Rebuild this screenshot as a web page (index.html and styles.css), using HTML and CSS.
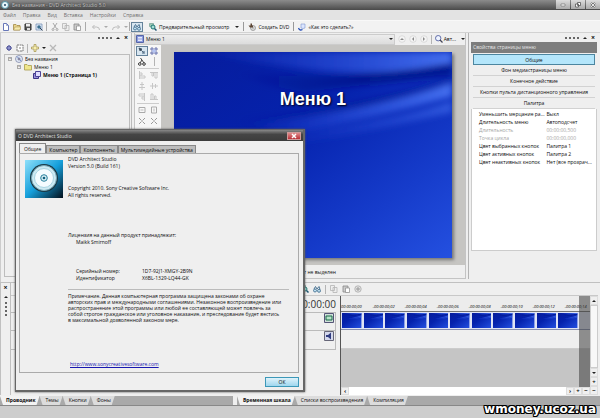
FILE: index.html
```html
<!DOCTYPE html>
<html lang="ru">
<head>
<meta charset="utf-8">
<title>Без названия - DVD Architect Studio 5.0</title>
<link rel="stylesheet" href="styles.css">
</head>
<body>
<svg class="defs" aria-hidden="true">
  <defs>
    <linearGradient id="sky" x1="0" y1="0" x2="1" y2="1">
      <stop offset="0" stop-color="#061c9c"/><stop offset=".4" stop-color="#0522ad"/><stop offset=".75" stop-color="#163ccb"/><stop offset="1" stop-color="#2450e0"/>
    </linearGradient>
    <linearGradient id="ray" x1="0" y1="0" x2="1" y2="0">
      <stop offset="0" stop-color="#2a50e6" stop-opacity="0"/><stop offset="1" stop-color="#4a76f4" stop-opacity=".9"/>
    </linearGradient>
    <linearGradient id="shade" x1="0" y1="0" x2="1" y2="0">
      <stop offset="0" stop-color="#001488" stop-opacity="0"/><stop offset=".6" stop-color="#001488" stop-opacity=".8"/><stop offset="1" stop-color="#041a94"/>
    </linearGradient>
    <linearGradient id="disc" x1="0" y1="0" x2="1" y2="1">
      <stop offset="0" stop-color="#8fe0fa"/><stop offset=".5" stop-color="#159fdb"/><stop offset="1" stop-color="#02101c"/>
    </linearGradient>
    <filter id="soft" x="-10%" y="-30%" width="120%" height="160%"><feGaussianBlur stdDeviation="3"/></filter>
  </defs>
  <symbol id="backdrop" viewBox="0 0 278 205" preserveAspectRatio="none">
    <rect width="278" height="205" fill="url(#sky)"/>
    <g filter="url(#soft)">
      <path d="M20 0H278V14Q190 24 130 17Q70 10 20 0Z" fill="url(#ray)"/>
      <path d="M60 20Q170 30 278 11V24Q190 32 130 40Q80 32 60 20Z" fill="url(#shade)"/>
      <path d="M70 70Q200 58 278 30V44Q200 66 110 82Z" fill="url(#ray)"/>
      <path d="M100 80Q210 72 278 49V60Q200 78 120 92Z" fill="url(#ray)" opacity=".6"/>
      <path d="M60 66Q180 56 278 26V31Q190 60 70 74Z" fill="url(#shade)" opacity=".6"/>
    </g>
  </symbol>
  <symbol id="i-new" viewBox="0 0 8 8"><path d="M1.5.5h3l2 2v5h-5z" fill="#fff" stroke="#6878b8"/><path d="M4.5.5v2h2" fill="none" stroke="#6878b8" stroke-width=".6"/></symbol>
  <symbol id="i-open" viewBox="0 0 8 8"><path d="M.5 7V1.5h2.5l1 1h3V7z" fill="#e8d48a" stroke="#a28a48" stroke-width=".8"/><path d="M.5 7 2 4h6L6.800 7z" fill="#f6ebaf" stroke="#a28a48" stroke-width=".5"/></symbol>
  <symbol id="i-save" viewBox="0 0 8 8"><path d="M1 1h6v6H1z" fill="#555" stroke="#333"/><path d="M2 1h4v2.500H2z" fill="#eee"/><path d="M3 5h3v2H3z" fill="#ddd"/></symbol>
  <symbol id="i-props" viewBox="0 0 8 8"><path d="M1 1h6v6H1z" fill="#dfe9f6" stroke="#6a88b0" stroke-width=".7"/><circle cx="4" cy="4" r="1.800" fill="#3c7090"/><path d="m5 5 2.500 2.500" stroke="#345"/></symbol>
  <symbol id="i-cut" viewBox="0 0 8 8"><path d="M2 0 5.500 5.500M6 0 2.500 5.500" stroke="#a8a8a8" fill="none"/><circle cx="2" cy="6.500" r="1" fill="none" stroke="#a8a8a8"/><circle cx="6" cy="6.500" r="1" fill="none" stroke="#a8a8a8"/></symbol>
  <symbol id="i-copy" viewBox="0 0 8 8"><path d="M.500 .500h4v5h-4zM3 2.500h4v5H3z" fill="#eee" stroke="#b4b4b4" stroke-width=".8"/></symbol>
  <symbol id="i-paste" viewBox="0 0 8 8"><path d="M1 1h5v6H1z" fill="#ccc" stroke="#888" stroke-width=".8"/><path d="M3.500 3h4v4.500h-4z" fill="#fff" stroke="#888" stroke-width=".7"/></symbol>
  <symbol id="i-undo" viewBox="0 0 8 8"><path d="M.500 4h4q3 0 3 3M2.500 2 .500 4l2 2" fill="none" stroke="#bcbcbc"/></symbol>
  <symbol id="i-redo" viewBox="0 0 8 8"><path d="M7.500 4h-4q-3 0-3 3M5.500 2l2 2-2 2" fill="none" stroke="#bcbcbc"/></symbol>
  <symbol id="i-find" viewBox="0 0 8 8"><path d="M1 4 2.500 1.500 4 4l2-2.500L7 4.500" fill="none" stroke="#4a7494"/><circle cx="2" cy="5.500" r="1.500" fill="#bfe0f0" stroke="#3a688c" stroke-width=".8"/><circle cx="6" cy="5.800" r="1.500" fill="#bfe0f0" stroke="#3a688c" stroke-width=".8"/></symbol>
  <symbol id="i-preview" viewBox="0 0 8 8"><path d="M.500 .500h4v3h-4z" fill="#9cc8b4" stroke="#68948c" stroke-width=".6"/><circle cx="4" cy="4" r="2" fill="#a8e0d8" stroke="#1c7470"/><path d="m5.500 5.500 2 2" stroke="#1c5470" stroke-width="1.500"/></symbol>
  <symbol id="i-burn" viewBox="0 0 8 8"><circle cx="5" cy="5" r="2.500" fill="#ddd" stroke="#888" stroke-width=".7"/><circle cx="5" cy="5" r=".7" fill="#fff" stroke="#777" stroke-width=".4"/><path d="M.500 2.500h2v-2h1.500v2h1v2H2z" fill="#5c4634"/></symbol>
  <symbol id="i-how" viewBox="0 0 8 8"><path d="M3 1h4v4l-2 .500L3 5z" fill="#dce6ff" stroke="#7c94cc" stroke-width=".6"/><path d="M.500 5q1 3 4 1.500" fill="none" stroke="#2850b8" stroke-width="1.300"/></symbol>
  <symbol id="i-gear" viewBox="0 0 8 8"><path d="M4 1v6M1 4h6M2 2l4 4M6 2l-4 4" stroke="#50549c"/><circle cx="4" cy="4" r="2" fill="#8c90cc" stroke="#484c90" stroke-width=".8"/></symbol>
  <symbol id="i-box" viewBox="0 0 8 8"><path d="M1 1h6v6H1z" fill="#fff" stroke="#777" stroke-dasharray="2 .6"/><circle cx="4" cy="4" r="1" fill="#aaa"/></symbol>
  <symbol id="i-add" viewBox="0 0 8 8"><path d="M3 .500h2V3h2.500v2H5v2.500H3V5H.500V3H3z" fill="#f7efb0" stroke="#a89a58" stroke-width=".8"/></symbol>
  <symbol id="i-del" viewBox="0 0 8 8"><path d="m1 1 6 6M7 1 1 7" stroke="#b8b8b8" stroke-width="1.300"/></symbol>
  <symbol id="i-disc" viewBox="0 0 8 8"><circle cx="4" cy="4" r="3.500" fill="#e4ecf8" stroke="#8088a8" stroke-width=".8"/><path d="M2 1.500 6 6" stroke="#7090d0"/><circle cx="4" cy="4" r="1" fill="#fff" stroke="#668"/></symbol>
  <symbol id="i-folder" viewBox="0 0 8 8"><path d="M.500 7V1.500H3l1 1h3.500V7z" fill="#efe68c" stroke="#a89c4c" stroke-width=".8"/></symbol>
  <symbol id="i-page" viewBox="0 0 8 8"><path d="M.500 2.500h5v5h-5z" fill="#9890d8" stroke="#3c3484"/><path d="M2.500.500h5v5h-5z" fill="#e0dcff" stroke="#4c4498"/></symbol>
  <symbol id="i-menu" viewBox="0 0 8 8"><path d="M.500 .500h7v7h-7z" fill="#8c9ce0" stroke="#5464a8"/><path d="M2 2.500h4M2 4h4M2 5.500h4" stroke="#fff" stroke-width=".8"/></symbol>
  <symbol id="i-cursor" viewBox="0 0 8 8"><path d="m1 1 3 1-2 2zM3 3l3 3" fill="#345" stroke="#345" stroke-width=".7"/><path d="M4.500 4.500h2v2h-2z" fill="none" stroke="#357" stroke-width=".5"/></symbol>
  <symbol id="i-grid" viewBox="0 0 8 8"><path d="M2 0v8M6 0v8M0 2h8M0 6h8" stroke="#5c68a8" stroke-width=".9"/><path d="M2.500 2.500h3v3h-3z" fill="#b4c4f4"/></symbol>
  <symbol id="i-link" viewBox="0 0 8 8"><path d="M2.500 0 6 5M4 2 2 5" stroke="#444" fill="none"/><circle cx="1.800" cy="6" r="1.300" fill="#fff" stroke="#333"/><circle cx="6" cy="6" r="1.300" fill="#fff" stroke="#333"/></symbol>
  <symbol id="i-al" viewBox="0 0 8 8"><path d="M1.500 0v8M2 2h2v2H2M2 5h5v2H2" fill="none" stroke="#c6c6c6"/></symbol>
  <symbol id="i-at" viewBox="0 0 8 8"><path d="M0 1.500h8M2 2v3h1.500V2M5 2v5h2V2" fill="none" stroke="#c6c6c6"/></symbol>
  <symbol id="i-ac" viewBox="0 0 8 8"><path d="M4 0v8M2 2.500h4M1 5.500h6" fill="none" stroke="#c6c6c6"/></symbol>
  <symbol id="i-size" viewBox="0 0 8 8"><path d="M1 1.500h6v5H1z" fill="#f8f8f8" stroke="#aaa"/><path d="M2.500 4h3" stroke="#bbb"/></symbol>
  <symbol id="i-x" viewBox="0 0 8 8"><path d="M1 1l2 2M7 1 5 3M1 7l2-2M7 7 5 5M3 4h2" stroke="#999" fill="none"/></symbol>
  <symbol id="i-up" viewBox="0 0 8 8"><circle cx="4" cy="4" r="3.300" fill="#f4f4f4" stroke="#ccc" stroke-width=".6"/><path d="m2 5 2-2 2 2z" fill="#8a8a8a"/></symbol>
  <symbol id="i-left" viewBox="0 0 8 8"><circle cx="4" cy="4" r="3.300" fill="#f4f4f4" stroke="#ccc" stroke-width=".6"/><path d="M5 2 3 4l2 2z" fill="#8a8a8a"/></symbol>
  <symbol id="i-right" viewBox="0 0 8 8"><circle cx="4" cy="4" r="3.300" fill="#f4f4f4" stroke="#ccc" stroke-width=".6"/><path d="m3 2 2 2-2 2z" fill="#8a8a8a"/></symbol>
  <symbol id="i-zoom" viewBox="0 0 8 8"><circle cx="3.200" cy="3.200" r="2.700" fill="#eef4ff" stroke="#5460a0" stroke-width=".9"/><path d="m5 5 2.500 2.500" stroke="#445" stroke-width="1.300"/></symbol>
  <symbol id="i-reel" viewBox="0 0 8 8"><circle cx="4" cy="4" r="3.200" fill="#e4e4e4" stroke="#a8a8a8" stroke-width=".8"/><path d="M2 4h4M4 2v4" stroke="#999"/></symbol>
  <symbol id="i-film" viewBox="0 0 10 10"><path d="M.500 .500h9v9h-9z" fill="#cfe0d8" stroke="#557"/><path d="M2 3h6v4H2z" fill="#b8e4c8" stroke="#186848"/></symbol>
  <symbol id="i-sound" viewBox="0 0 10 10"><path d="M.500 .500h9v9h-9z" fill="#d4d8ec" stroke="#667"/><path d="M2 4h2l3-2.500v7L4 6H2z" fill="#303c80"/></symbol>
</svg>

<header class="titlebar">
  <svg class="ico" viewBox="0 0 8 8"><circle cx="4" cy="4" r="3.500" fill="#e8f6fa" stroke="#4f8ca0"/><circle cx="4" cy="4" r="1" fill="#246"/></svg>
  <h1>Без названия - DVD Architect Studio 5.0</h1>
  <div class="winbtns">
    <button aria-label="Свернуть"><svg viewBox="0 0 8 6"><path d="M2 2h4v2H2z" fill="#fff" stroke="#777" stroke-width=".7"/></svg></button>
    <button aria-label="Восстановить"><svg viewBox="0 0 8 6"><path d="M3.500 .500h3v3h-3zM1.500 2h3v3h-3z" fill="#fff" stroke="#555" stroke-width=".8"/></svg></button>
    <button aria-label="Закрыть"><svg viewBox="0 0 8 6"><path d="m2 1 4 4M6 1 2 5" stroke="#666" stroke-width="1.800"/><path d="m2 1 4 4M6 1 2 5" stroke="#fff" stroke-width=".8"/></svg></button>
  </div>
</header>
<nav class="menubar"><a href="#">Файл</a><a href="#">Правка</a><a href="#">Вид</a><a href="#">Вставка</a><a href="#">Настройки</a><a href="#">Справка</a></nav>

<div class="toolbar">
  <div class="group g1">
    <button aria-label="Создать"><svg class="ico"><use href="#i-new"/></svg></button><button aria-label="Открыть"><svg class="ico"><use href="#i-open"/></svg></button><button aria-label="Сохранить"><svg class="ico"><use href="#i-save"/></svg></button><button aria-label="Свойства"><svg class="ico"><use href="#i-props"/></svg></button>
  </div>
  <div class="group g2">
    <button aria-label="Вырезать"><svg class="ico"><use href="#i-cut"/></svg></button><button aria-label="Копировать"><svg class="ico"><use href="#i-copy"/></svg></button><button aria-label="Вставить"><svg class="ico"><use href="#i-paste"/></svg></button>
  </div>
  <div class="group g3">
    <button aria-label="Отменить"><svg class="ico"><use href="#i-undo"/></svg></button><i class="caret dim"></i><button aria-label="Повторить"><svg class="ico"><use href="#i-redo"/></svg></button><i class="caret dim"></i>
  </div>
  <button class="pressed" aria-label="Поиск"><svg class="ico"><use href="#i-find"/></svg></button>
  <button class="label preview"><svg class="ico"><use href="#i-preview"/></svg>Предварительный просмотр<i class="caret"></i></button>
  <button class="label"><svg class="ico"><use href="#i-burn"/></svg>Создать DVD</button>
  <button class="label last"><svg class="ico"><use href="#i-how"/></svg>«Как это сделать?»</button>
</div>

<main class="work">
  <section class="explorer">
    <div class="grip"><i></i><b class="tri"></b><b>×</b></div>
    <div class="extools">
      <button aria-label="Параметры"><svg class="ico"><use href="#i-gear"/></svg></button><button aria-label="Вид"><svg class="ico"><use href="#i-box"/></svg></button><span class="bar"></span><button aria-label="Добавить"><svg class="ico"><use href="#i-add"/></svg></button><i class="caret"></i><button aria-label="Удалить"><svg class="ico"><use href="#i-del"/></svg></button>
    </div>
    <ul class="tree">
      <li><span class="fold">−</span><svg class="ico"><use href="#i-disc"/></svg>Без названия</li>
      <li class="lv2"><span class="fold">−</span><svg class="ico"><use href="#i-folder"/></svg>Меню 1</li>
      <li class="lv3"><svg class="ico"><use href="#i-page"/></svg>Меню 1 (Страница 1)</li>
    </ul>
  </section>

  <section class="editor">
    <div class="pagebar">
      <button class="combo"><svg class="ico"><use href="#i-menu"/></svg><span>Меню 1</span><i class="caret"></i></button>
      <button aria-label="Вверх"><svg class="ico"><use href="#i-up"/></svg></button><button aria-label="Назад"><svg class="ico"><use href="#i-left"/></svg></button><button aria-label="Вперёд"><svg class="ico"><use href="#i-right"/></svg></button><span class="bar"></span>
      <button class="zoom"><svg class="ico"><use href="#i-zoom"/></svg>Авт...<i class="caret"></i></button>
    </div>
    <div class="stage">
      <div class="palette">
        <button class="pressed" aria-label="Выбор"><svg class="ico"><use href="#i-cursor"/></svg></button><button aria-label="Сетка"><svg class="ico"><use href="#i-grid"/></svg></button>
        <button aria-label="Связь"><svg class="ico"><use href="#i-link"/></svg></button><span class="bar"></span>
        <hr>
        <button aria-label="По левому краю"><svg class="ico"><use href="#i-al"/></svg></button><button aria-label="По верхнему краю"><svg class="ico"><use href="#i-at"/></svg></button>
        <button aria-label="По центру"><svg class="ico"><use href="#i-ac"/></svg></button><button aria-label="По середине"><svg class="ico turn"><use href="#i-ac"/></svg></button>
        <button aria-label="По правому краю"><svg class="ico flip"><use href="#i-al"/></svg></button><button aria-label="По нижнему краю"><svg class="ico flip"><use href="#i-at"/></svg></button>
        <hr>
        <button aria-label="Ширина"><svg class="ico"><use href="#i-size"/></svg></button><button aria-label="Высота"><svg class="ico turn"><use href="#i-size"/></svg></button>
        <button aria-label="Сжать"><svg class="ico"><use href="#i-x"/></svg></button><button aria-label="Растянуть"><svg class="ico turn"><use href="#i-x"/></svg></button>
      </div>
      <div class="canvas">
        <div class="slide"><svg class="bg"><use href="#backdrop"/></svg><h2>Меню 1</h2></div>
      </div>
    </div>
    <p class="selinfo">Объект не выделен</p>
  </section>

  <aside class="props">
    <div class="grip"><i></i><b class="tri"></b><b>×</b></div>
    <h3>Свойства страницы меню</h3>
    <div class="cats">
      <button class="on">Общие</button><button>Фон медиастраницы меню</button><button>Конечное действие</button><button>Кнопки пульта дистанционного управления</button><button>Палитра</button>
    </div>
    <div class="sheet">
      <table>
        <tr><th>Уменьшить мерцание ра...</th><td>Выкл</td></tr>
        <tr><th>Длительность меню</th><td>Автоподсчет</td></tr>
        <tr class="off"><th>Длительность</th><td>00:00:00,500</td></tr>
        <tr class="off"><th>Точка цикла</th><td>00:00:00,000</td></tr>
        <tr><th>Цвет выбранных кнопок</th><td>Палитра 1</td></tr>
        <tr><th>Цвет активных кнопок</th><td>Палитра 2</td></tr>
        <tr><th>Цвет неактивных кнопок</th><td>Нет (все прозрач...</td></tr>
      </table>
    </div>
  </aside>
</main>

<section class="dock">
  <div class="sidegrip"><b>×</b><b class="tri"></b><i></i></div>
  <div class="timeline">
    <div class="tltools">
      <svg class="ico"><use href="#i-preview"/></svg><svg class="ico"><use href="#i-find"/></svg><span class="bar"></span><svg class="ico"><use href="#i-copy"/></svg><svg class="ico"><use href="#i-paste"/></svg><svg class="ico"><use href="#i-reel"/></svg>
    </div>
    <div class="tlbody">
      <div class="heads">
        <div class="clock">00:00:00</div>
        <div class="head"><svg class="tico"><use href="#i-film"/></svg></div>
        <div class="head"><svg class="tico"><use href="#i-sound"/></svg></div>
      </div>
      <div class="tracks">
        <div class="lanes">
          <div class="ruler"><span>00:00:00;00</span><span>,00:00:00;02</span><span>,00:00:00;04</span><span>,00:00:00;06</span><span>,00:00:00;08</span><span>,00:00:00;10</span><span>,00:00:00;12</span><span>,00:00:00;14</span></div>
          <div class="clips"><svg><use href="#backdrop"/></svg><svg><use href="#backdrop"/></svg><svg><use href="#backdrop"/></svg><svg><use href="#backdrop"/></svg><svg><use href="#backdrop"/></svg><svg><use href="#backdrop"/></svg><svg><use href="#backdrop"/></svg><svg><use href="#backdrop"/></svg><svg><use href="#backdrop"/></svg><svg><use href="#backdrop"/></svg><svg><use href="#backdrop"/></svg></div>
          <div class="audio"></div>
          <div class="past"></div>
        </div>
        <div class="hscroll"><button aria-label="Влево">‹</button><span></span><button aria-label="Вправо">›</button><button aria-label="Крупнее">+</button><button aria-label="Мельче">−</button></div>
      </div>
      <div class="vscroll"><button aria-label="Выше"><b class="tri"></b></button><span></span><button aria-label="Ниже"><i class="caret"></i></button><button aria-label="Увеличить">+</button><button aria-label="Уменьшить">−</button></div>
    </div>
  </div>
</section>

<footer class="bottom">
  <div class="tabs left"><a href="#" class="on">Проводник</a><a href="#">Темы</a><a href="#">Кнопки</a><a href="#">Фоны</a></div>
  <div class="tabs right"><a href="#" class="on">Временная шкала</a><a href="#">Списки воспроизведения</a><a href="#">Компиляция</a></div>
</footer>
<div class="status"></div>
<div class="mark">wmoney.ucoz.ua</div>

<div class="dialog" role="dialog" aria-label="DVD Architect Studio">
  <div class="dtitle"><span>О DVD Architect Studio</span><button aria-label="Закрыть окно"><svg viewBox="0 0 12 6"><path d="m4 1 4 4M8 1 4 5" stroke="#fff" stroke-width="1.500"/></svg></button></div>
  <div class="dtabs"><button class="on">Общие</button><button>Компьютер</button><button>Компоненты</button><button>Мультимедийные устройства</button></div>
  <div class="dpage">
    <svg class="logo" viewBox="0 0 38 38"><rect width="38" height="38" fill="url(#disc)"/><circle cx="19" cy="18" r="14" fill="#1a3844"/><circle cx="19" cy="18" r="12.500" fill="#cdeaf2" stroke="#76a8b8"/><circle cx="19" cy="18" r="9.500" fill="#f4fcff" stroke="#a8d4e2"/><circle cx="19" cy="18" r="3.300" fill="#d4eef6" stroke="#28809c"/><circle cx="19" cy="18" r="1.300" fill="#12607c"/></svg>
    <div class="about">
      <p>DVD Architect Studio<br>Version 5.0 (Build 161)</p>
      <p class="copy">Copyright 2010. Sony Creative Software Inc.<br>All rights reserved.</p>
      <p class="lic">Лицензия на данный продукт принадлежит:<span>Maikk Smirnoff</span></p>
      <dl><dt>Серийный номер:</dt><dd>1D7-92J1-XMGY-2B9N</dd><dt>Идентификатор</dt><dd>X6BL-1329-LQ44-GK</dd></dl>
      <p class="note">Примечание. Данная компьютерная программа защищена законами об охране<br>авторских прав и международными соглашениями. Незаконное воспроизведение или<br>распространение этой программы или любой ее составляющей может повлечь за<br>собой строгое гражданское или уголовное наказание, и преследование будет вестись<br>в максимальной дозволенной законом мере.</p>
      <a href="#">http://www.sonycreativesoftware.com</a>
    </div>
  </div>
  <div class="dfoot"><button>ОК</button></div>
</div>
</body>
</html>
```
FILE: styles.css
```css
* { box-sizing: border-box; margin: 0; padding: 0; }
body {
  display: flex; flex-direction: column; height: 100vh; overflow: hidden; position: relative;
  font: 5px/8px "Open Sans", "Noto Sans", sans-serif; color: #0c0c0c; background: #efefef;
}
button { font: inherit; color: inherit; background: none; border: 0; display: flex; align-items: center; justify-content: center; }
a { color: inherit; text-decoration: none; }
ul { list-style: none; }
svg { display: block; }
.defs { position: absolute; width: 0; height: 0; }
.ico { width: 8px; height: 8px; flex: none; }
.turn { transform: rotate(90deg); }
.flip { transform: rotate(180deg); }
.bar { width: 1px; height: 9px; background: #b4b4b4; flex: none; }
.caret { border: 2px solid transparent; border-top-color: #222; border-bottom: 0; width: 4px; flex: none; }
.caret.dim { border-top-color: #aaa; }
.tri { border: 2px solid transparent; border-bottom-color: #222; border-top: 0; width: 4px; height: 2px; flex: none; }

.titlebar { display: flex; align-items: center; gap: 3px; height: 10px; flex: none; padding-left: 1px; background: linear-gradient(#8c8c8c, #4a4a4a); }
.titlebar h1 { flex: 1; font-size: 5px; font-weight: 400; line-height: 9px; color: #c4c4c4; text-shadow: 0 0 2px #222; }
.winbtns { display: flex; gap: 1px; height: 9px; align-self: flex-start; }
.winbtns button { width: 14px; background: linear-gradient(#ddd, #aaa); }
.winbtns svg { width: 8px; height: 6px; }
.menubar { display: flex; gap: 7px; height: 11px; flex: none; padding: 1px 3px; line-height: 9px; color: #6e6e6e; background: #e3e3e3; border-bottom: 1px solid #f8f8f8; }
.toolbar { display: flex; align-items: center; height: 12px; flex: none; padding-left: 2px; border-bottom: 1px solid #d2d2d2; background: #f2f2f2; }
.group { display: flex; align-items: center; height: 9px; border-right: 1px solid #aaa; }
.g1 { gap: 3px; padding-right: 3px; }
.g2 { gap: 3px; padding: 0 4px; }
.g3 { gap: 4px; padding: 0 1px 0 6px; }
.pressed { border: 1px solid #65829a; background: #d8e6f0; height: 10px; width: 12px; }
.toolbar .pressed { margin: 0 6px 0 1px; }
.label { gap: 2px; padding: 0 4px; border-right: 1px solid #999; height: 9px; white-space: nowrap; }
.label.preview { padding-left: 0; }
.label.preview .caret { margin-left: 4px; }
.label.last { border: 0; }

.work { display: flex; flex: 1; min-height: 0; gap: 2px; }
.grip { display: flex; align-items: center; justify-content: flex-end; gap: 4px; height: 9px; padding-right: 2px; font-size: 7px; line-height: 8px; }
.grip i, .sidegrip i { border-top: 2px dotted #666; width: 14px; }
.explorer { display: flex; flex-direction: column; width: 22%; flex: none; padding: 0 1px 0 3px; border-left: 1px solid #ccc; border-right: 1px solid #bbb; }
.extools { display: flex; align-items: center; gap: 3px; height: 12px; padding: 0 1px; }
.tree { flex: 1; border: 1px solid #bdbdbd; margin-bottom: 5px; }
.tree li { display: flex; align-items: center; gap: 2px; line-height: 8px; padding-left: 3px; }
.tree .lv2 { padding-left: 12px; }
.tree .lv3 { padding-left: 28px; font-weight: 700; }
.fold { width: 4px; height: 4px; border: 1px solid #aaa; font-size: 4px; line-height: 2px; margin-right: 1px; }

.editor { display: flex; flex-direction: column; flex: 1; min-width: 0; border-left: 1px solid #c4c4c4; border-right: 1px solid #c4c4c4; margin-bottom: 3px; }
.pagebar { display: flex; align-items: center; gap: 3px; height: 12px; }
.combo { flex: 1; height: 11px; gap: 2px; padding: 0 1px 0 0; background: linear-gradient(#ededed, #dcdcdc); border: 1px solid #ccc; }
.combo span { flex: 1; text-align: left; }
.zoom { gap: 1px; }
.zoom .caret { margin-left: 4px; }
.stage { display: flex; flex: 1; min-height: 0; }
.palette { display: grid; grid-template-columns: 12px 12px; grid-auto-rows: max-content; align-content: start; gap: 1px 0; width: 26px; padding: 1px; background: #f6f6f6; justify-items: center; }
.palette button { height: 10px; }
.palette hr { grid-column: 1 / 3; width: 22px; border: 0; border-top: 1px solid #ccc; }
.canvas { flex: 1; display: flex; padding: 7px 13px 7px 13px; background: #c6c5c2; }
.slide { flex: 1; position: relative; display: flex; justify-content: center; box-shadow: 2px 2px 3px #777; overflow: hidden; }
.bg { position: absolute; inset: 0; width: 100%; height: 100%; }
.slide h2 { position: relative; padding-top: 36px; font: 700 18px/22px "Liberation Sans", sans-serif; color: #fff; text-shadow: 1px 1px 2px #001; }
.selinfo { height: 14px; line-height: 14px; padding-left: 24px; text-align: center; border-bottom: 1px solid #c4c4c4; }

.props { display: flex; flex-direction: column; width: 22%; flex: none; padding: 0 3px 8px 2px; border-left: 1px solid #b4b4b4; margin-bottom: 3px; }
.props h3 { height: 11px; padding-left: 2px; background: #7d7d7d; color: #e6e6e6; font-size: 5px; line-height: 11px; font-weight: 400; }
.cats { display: grid; padding: 1px 2px 0; }
.cats button { height: 11px; border-bottom: 1px solid #d2d2d2; white-space: nowrap; }
.cats .on { border: 1px solid #4c86a0; background: #b4e6fb; }
.sheet { flex: 1; margin-bottom: 20px; background: #fff; border: 1px solid #ccc; border-top: 0; }
table { width: 100%; table-layout: fixed; border-collapse: collapse; margin-top: 1px; white-space: nowrap; }
th { width: 60%; text-align: left; font-weight: 400; padding-left: 7px; line-height: 8px; }
.off { color: #a4a4a4; }

.dock { display: flex; height: 113px; flex: none; border-top: 1px solid #c0c0c0; padding-right: 2px; }
.sidegrip { display: flex; flex-direction: column; align-items: center; gap: 4px; width: 10px; border-left: 1px solid #c0c0c0; padding-top: 1px; font-size: 7px; }
.sidegrip i { transform: rotate(90deg); margin-top: 6px; }
.timeline { flex: 1; display: flex; flex-direction: column; min-width: 0; border-left: 1px solid #c0c0c0; }
.tltools { display: flex; align-items: center; gap: 4px; height: 13px; border-bottom: 1px solid #c8c8c8; padding-left: 290px; }
.tlbody { display: flex; flex: 1; min-height: 0; }
.heads { width: 330px; flex: none; border-right: 1px solid #555; }
.clock { height: 16px; padding-right: 4px; text-align: right; font-size: 10px; line-height: 16px; color: #333; }
.head { display: flex; justify-content: flex-end; height: 19px; margin-right: 4px; padding-right: 1px; border: 1px solid #bbb; border-left: 0; border-top: 0; }
.head:nth-child(2) { border-top: 1px solid #bbb; }
.tico { width: 10px; height: 10px; }
.tracks { flex: 1; display: flex; flex-direction: column; min-width: 0; }
.lanes { flex: 1; background: #c5c5c5; position: relative; }
.ruler { display: grid; grid-template-columns: repeat(7, 32px) 1fr; height: 16px; padding-top: 7px; background: #ececec; font-size: 4px; font-style: italic; border-bottom: 1px solid #777; white-space: nowrap; }
.clips { display: flex; gap: 2px; height: 18px; padding: 1px 12px 1px 1px; background: #e0e4f4; border-bottom: 1px solid #8890b0; }
.clips svg { flex: 1; min-width: 0; height: 15px; }
.audio { height: 19px; background: #efefef; border-bottom: 1px solid #ccc; }
.past { position: absolute; right: 0; top: 0; bottom: 0; width: 11px; background: rgba(60, 60, 60, .55); }
.hscroll { display: flex; height: 8px; background: #f0f0f0; line-height: 7px; }
.hscroll span { flex: 1; background: #fff; }
.hscroll button, .vscroll button { min-width: 8px; border: 1px solid #ddd; font-weight: 700; font-size: 6px; }
.vscroll { display: flex; flex-direction: column; width: 8px; }
.vscroll button { height: 9px; }
.vscroll span { flex: 1; background: #f8f8f8; border: 1px solid #ccc; }

.bottom { display: flex; height: 11px; flex: none; gap: 4px; border-bottom: 1px solid #888; background: #efefef; }
.tabs { display: flex; background: #a9a9a9; margin-top: 1px; }
.tabs.left { width: 233px; flex: none; }
.tabs.right { flex: 1; }
.tabs a { padding: 0 4px 0 6px; background: #dcdcdc; clip-path: polygon(0 0, 100% 0, calc(100% - 3px) 100%, 3px 100%); line-height: 9px; }
.tabs .on { background: #f2f2f2; font-weight: 700; }
.status { height: 12px; flex: none; background: #cdcdcd; }
.mark { position: absolute; right: 4px; bottom: 2px; font: 700 12px/14px "DejaVu Sans", sans-serif; color: #fff; text-shadow: 1px 0 #000, -1px 0 #000, 0 1px #000, 0 -1px #000, 1px 1px #000, -1px -1px #000, 1px -1px #000, -1px 1px #000; }

.dialog { position: absolute; left: 15px; top: 129px; width: 290px; display: flex; flex-direction: column; border: 1px solid #666; border-right-width: 2px; border-bottom-width: 2px; background: #efefef; box-shadow: 0 0 2px #555; }
.dtitle { display: flex; justify-content: space-between; align-items: center; height: 11px; padding: 0 2px; background: linear-gradient(#888, #454545 40%, #3c3c3c); color: #e4e4e4; }
.dtitle button { width: 14px; height: 8px; background: linear-gradient(#e08c8c, #b83038); border: 1px solid #c99; }
.dtitle svg { width: 12px; height: 6px; }
.dtabs { display: flex; align-items: flex-end; height: 12px; padding-left: 3px; }
.dtabs button { height: 8px; padding: 0 2px; border: 1px solid #888; border-bottom: 0; background: #bdbdbd; white-space: nowrap; }
.dtabs .on { height: 10px; padding: 0 4px; background: #efefef; }
.dpage { display: flex; gap: 5px; height: 220px; margin: 0 4px 0 3px; padding: 2px 9px 0 5px; border: 1px solid #aaa; }
.logo { width: 38px; height: 38px; flex: none; margin-top: 4px; }
.about { flex: 1; line-height: 7px; white-space: nowrap; }
.copy { margin-top: 15px; }
.lic { margin-top: 33px; }
.lic span { display: block; padding-left: 8px; }
dl { display: grid; grid-template-columns: 66px 1fr; margin-top: 22px; padding: 0 0 7px 8px; border-bottom: 1px solid #bbb; }
.note { margin-top: 3px; line-height: 6px; }
.about a { display: block; margin-top: 38px; padding-left: 2px; color: #1818b0; text-decoration: underline; }
.dfoot { display: flex; justify-content: flex-end; padding: 4px; height: 17px; }
.dfoot button { width: 34px; height: 10px; border: 1px solid #3c98b8; background: linear-gradient(#dff3fb, #9fd6ee); }
```
